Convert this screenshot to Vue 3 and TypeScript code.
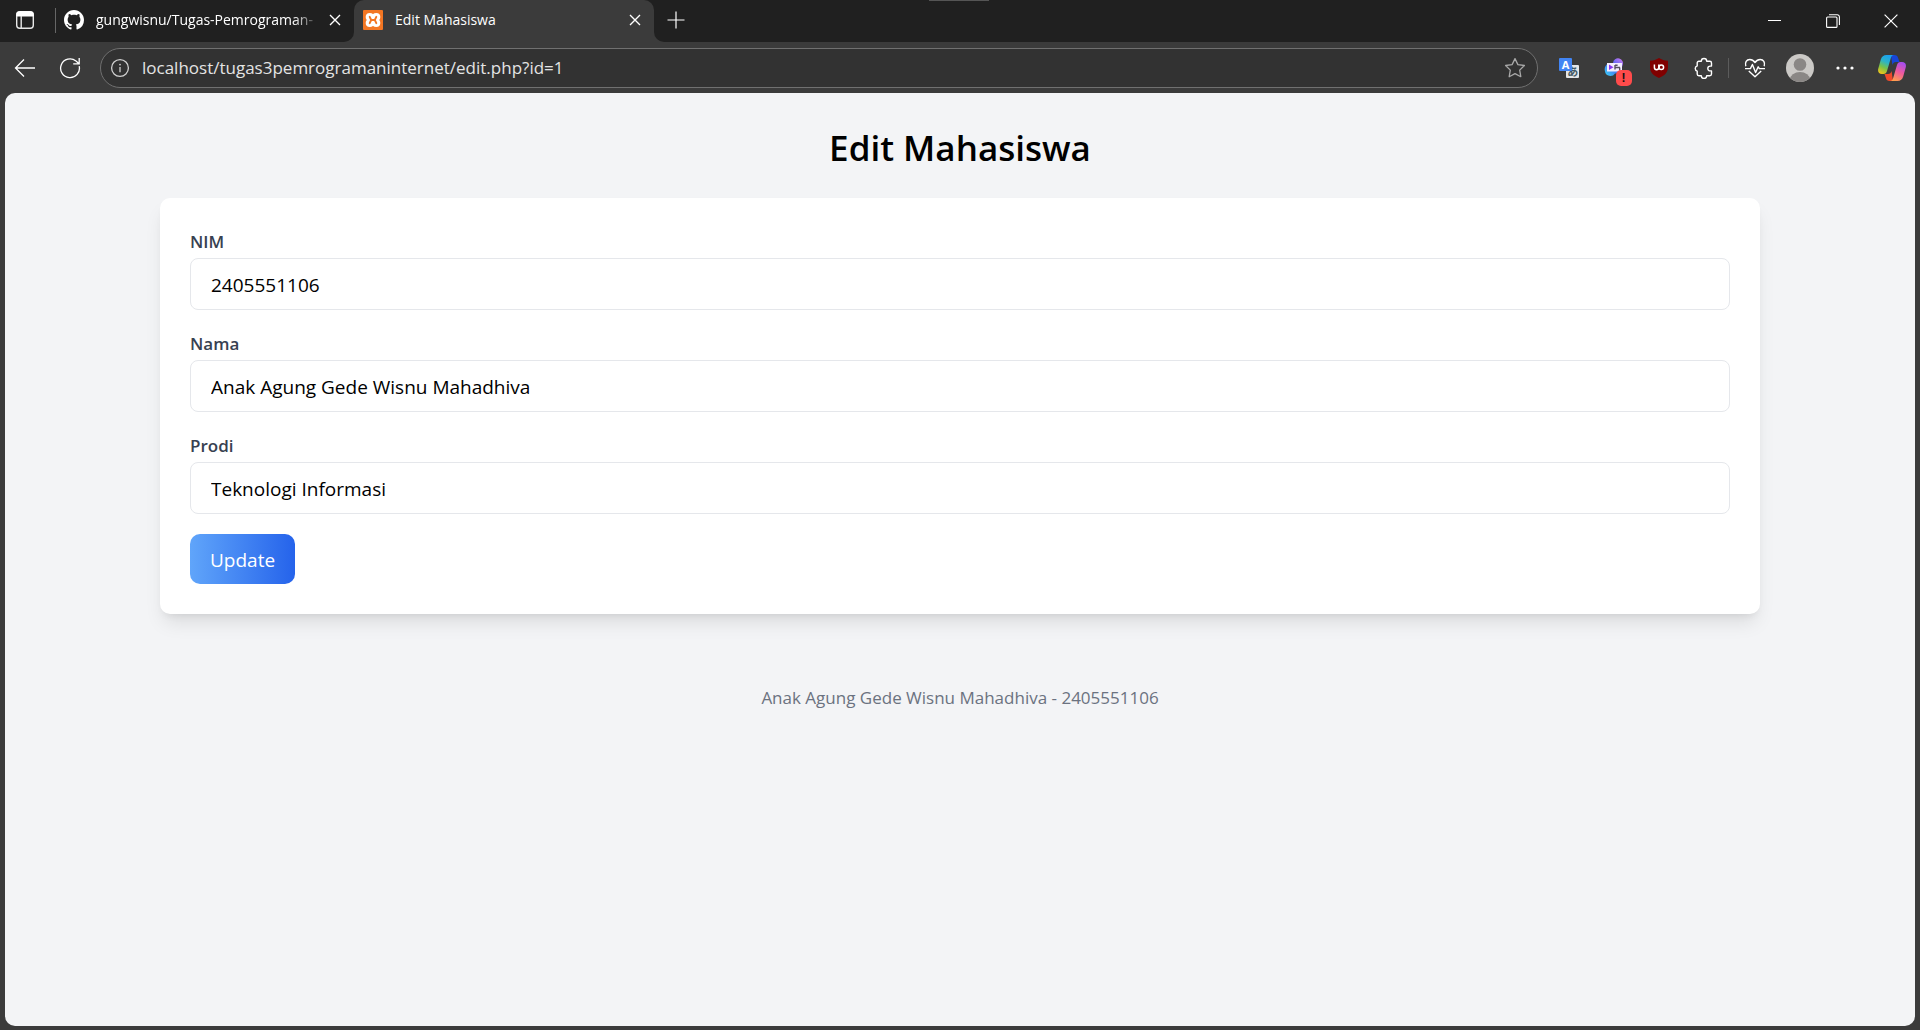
<script setup lang="ts">
import { reactive, ref } from 'vue'

interface Field {
  id: string
  label: string
  value: string
}

const address = ref('localhost/tugas3pemrogramaninternet/edit.php?id=1')

const fields = reactive<Field[]>([
  { id: 'nim', label: 'NIM', value: '2405551106' },
  { id: 'nama', label: 'Nama', value: 'Anak Agung Gede Wisnu Mahadhiva' },
  { id: 'prodi', label: 'Prodi', value: 'Teknologi Informasi' },
])
</script>

<template>
  <div class="browser">
    <header class="tabstrip">
      <div class="strip-left">
        <button class="icon-btn tab-actions" type="button" aria-label="Tab actions">
          <svg width="20" height="20" viewBox="0 0 20 20" fill="none">
            <rect x="1.7" y="1.7" width="16.6" height="16.6" rx="3" stroke="#e8e8e8" stroke-width="1.4" />
            <path d="M1.7 6V4.5a2.8 2.8 0 0 1 2.8-2.8h11a2.8 2.8 0 0 1 2.8 2.8V6z" fill="#fff" stroke="#fff" />
            <path d="M6.2 6v12" stroke="#e8e8e8" stroke-width="1.4" />
          </svg>
        </button>
        <div class="tab idle">
          <svg class="favicon" width="20" height="20" viewBox="0 0 16 16" fill="#fff">
            <path d="M8 0C3.58 0 0 3.58 0 8c0 3.54 2.29 6.53 5.47 7.59.4.07.55-.17.55-.38 0-.19-.01-.82-.01-1.49-2.01.37-2.53-.49-2.69-.94-.09-.23-.48-.94-.82-1.13-.28-.15-.68-.52-.01-.53.63-.01 1.08.58 1.23.82.72 1.21 1.87.87 2.33.66.07-.52.28-.87.51-1.07-1.78-.2-3.64-.89-3.64-3.95 0-.87.31-1.59.82-2.15-.08-.2-.36-1.02.08-2.12 0 0 .67-.21 2.2.82.64-.18 1.32-.27 2-.27s1.36.09 2 .27c1.53-1.04 2.2-.82 2.2-.82.44 1.1.16 1.92.08 2.12.51.56.82 1.27.82 2.15 0 3.07-1.87 3.75-3.65 3.95.29.25.54.73.54 1.48 0 1.07-.01 1.93-.01 2.2 0 .21.15.46.55.38A8.01 8.01 0 0 0 16 8c0-4.42-3.58-8-8-8z" />
          </svg>
          <span class="tab-title faded">gungwisnu/Tugas-Pemrograman-</span>
          <button class="icon-btn close" type="button" aria-label="Close tab">
            <svg width="12" height="12" viewBox="0 0 12 12" stroke="#fff" stroke-width="1.4"><path d="M1 1l10 10M11 1L1 11" /></svg>
          </button>
        </div>
      </div>
      <div class="strip-active">
        <div class="tab active">
          <svg class="favicon" width="20" height="20" viewBox="0 0 20 20">
            <rect width="20" height="20" rx="1" fill="#f37623" />
            <g fill="#fff">
              <circle cx="6.8" cy="7" r="4.1" />
              <circle cx="13.2" cy="7" r="4.1" />
              <circle cx="6.8" cy="13" r="4.1" />
              <circle cx="13.2" cy="13" r="4.1" />
              <rect x="4.5" y="6" width="11" height="8" />
            </g>
            <path d="M6.7 6.8L8.2 10l-1.5 3.2M13.3 6.8L11.8 10l1.5 3.2M8.2 10h3.600" fill="none" stroke="#f37623" stroke-width="1.9" stroke-linecap="round" stroke-linejoin="round" />
          </svg>
          <span class="tab-title">Edit Mahasiswa</span>
          <button class="icon-btn close" type="button" aria-label="Close tab">
            <svg width="12" height="12" viewBox="0 0 12 12" stroke="#fff" stroke-width="1.4"><path d="M1 1l10 10M11 1L1 11" /></svg>
          </button>
        </div>
      </div>
      <div class="strip-right">
        <button class="icon-btn new-tab" type="button" aria-label="New tab">
          <svg width="18" height="18" viewBox="0 0 18 18" stroke="#fff" stroke-width="1.2"><path d="M9 .5v17M.5 9h17" /></svg>
        </button>
        <div class="window-controls">
          <button class="icon-btn" type="button" aria-label="Minimize">
            <svg width="14" height="14" viewBox="0 0 14 14" stroke="#fff" stroke-width="1"><path d="M0 6.5h13" /></svg>
          </button>
          <button class="icon-btn" type="button" aria-label="Restore">
            <svg width="14" height="14" viewBox="0 0 14 14" stroke="#fff" stroke-width="1.1" fill="none">
              <rect x=".6" y="3" width="10.4" height="10.4" rx="1" />
              <path d="M3 .8h8.2a2.2 2.2 0 0 1 2.2 2.2V11" />
            </svg>
          </button>
          <button class="icon-btn" type="button" aria-label="Close window">
            <svg width="14" height="14" viewBox="0 0 14 14" stroke="#fff" stroke-width="1.2"><path d="M.6.6l12.8 12.8M13.4.6L.6 13.4" /></svg>
          </button>
        </div>
      </div>
      <span class="grip"></span>
    </header>

    <nav class="toolbar" aria-label="Browser toolbar">
      <button class="icon-btn tool" type="button" aria-label="Back">
        <svg width="22" height="20" viewBox="0 0 22 20" fill="none" stroke="#fff" stroke-width="1.3"><path d="M21 10H1.5M10 1.500L1.500 10l8.500 8.500" /></svg>
      </button>
      <button class="icon-btn tool" type="button" aria-label="Refresh">
        <svg width="22" height="22" viewBox="0 0 22 22" fill="none" stroke="#fff" stroke-width="1.3"><path d="M20.200 9.200A9.400 9.400 0 1 1 17 4l2.500 2.200M20.200 1v5.800h-6" /></svg>
      </button>
      <div class="address">
        <svg width="20" height="20" viewBox="0 0 20 20" fill="none" stroke="#d0d0d0" stroke-width="1.3">
          <circle cx="10" cy="10" r="8.4" />
          <path d="M10 9v5.2" />
          <circle cx="10" cy="6.6" r=".9" fill="#d0d0d0" stroke="none" />
        </svg>
        <input v-model="address" class="url" type="text" aria-label="Address" spellcheck="false" />
        <button class="icon-btn star" type="button" aria-label="Add to favorites">
          <svg width="22" height="22" viewBox="0 0 22 22" fill="none" stroke="#a8a8a8" stroke-width="1.3" stroke-linejoin="round">
            <path d="M11 1.6l2.9 6 6.5.9-4.7 4.6 1.1 6.6-5.8-3.1-5.8 3.1 1.1-6.6L1.6 8.5l6.5-.9z" />
          </svg>
        </button>
      </div>
      <div class="extensions">
        <button class="icon-btn tool" type="button" aria-label="Translate">
          <svg width="20" height="20" viewBox="0 0 20 20">
            <rect x="7" y="7" width="13" height="13" rx="1" fill="#e4e6e8" />
            <text x="13.8" y="18" font-size="11" font-weight="bold" text-anchor="middle" fill="#455a64" class="jp">あ</text>
            <rect width="13" height="13" rx="1" fill="#4285f4" />
            <text x="6.5" y="10.500" font-size="11" font-weight="bold" text-anchor="middle" fill="#fff" class="latin">A</text>
          </svg>
        </button>
        <button class="icon-btn tool" type="button" aria-label="Video assistant">
          <span class="badged">
            <svg width="20" height="20" viewBox="0 0 20 20">
              <defs>
                <linearGradient id="cloud" x1="0" y1="1" x2="1" y2="0">
                  <stop offset="0" stop-color="#39d5f5" />
                  <stop offset=".55" stop-color="#4a63f5" />
                  <stop offset="1" stop-color="#d47af0" />
                </linearGradient>
              </defs>
              <path d="M9 5a5 5 0 1 1 9.500 2.500L16 15l-5 .5a5.500 5.500 0 0 1-10-2C0 10 1.500 7 4 5.500z" fill="url(#cloud)" />
              <rect x="3" y="5" width="15" height="8.500" fill="#f3edff" />
              <path d="M5 6.500l4.500 2.800L5 12.100z" fill="#8a35ee" />
              <path d="M11 7.200h2.600M11 9.500h5M11 7v4.600M15.700 9.500v3" stroke="#56505f" stroke-width="1.4" fill="none" />
            </svg>
            <span class="badge">!</span>
          </span>
        </button>
        <button class="icon-btn tool" type="button" aria-label="Content blocker">
          <svg width="20" height="20" viewBox="0 0 20 20">
            <path d="M10 0c2.500 1.700 5.500 2.500 9 2.700V9c0 5.500-3.500 8.700-9 11C4.500 17.700 1 14.500 1 9V2.700C4.500 2.500 7.500 1.700 10 0z" fill="#800000" />
            <path d="M5.400 6.500v3a2.200 2.200 0 0 0 4.400 0v-3" fill="none" stroke="#fff" stroke-width="1.5" />
            <circle cx="12.300" cy="9.200" r="2.300" fill="none" stroke="#fff" stroke-width="1.5" />
          </svg>
        </button>
        <button class="icon-btn tool" type="button" aria-label="Extensions">
          <svg width="22" height="22" viewBox="0 0 22 22" fill="none" stroke="#fff" stroke-width="1.4" stroke-linejoin="round">
            <path d="M8.300 4.200a2.700 2.700 0 0 1 5.400 0h3.100a1.700 1.700 0 0 1 1.700 1.700v3.200h-1.300a2.400 2.400 0 0 0 0 4.800h1.300v3.200a1.700 1.700 0 0 1-1.700 1.700h-3.100a2.700 2.700 0 0 1-5.400 0H5.900a1.700 1.700 0 0 1-1.700-1.700v-3a2.700 2.700 0 0 1 0-5.200V5.900a1.700 1.700 0 0 1 1.700-1.700z" />
          </svg>
        </button>
      </div>
      <span class="divider"></span>
      <button class="icon-btn tool" type="button" aria-label="Browser essentials">
        <svg width="22" height="20" viewBox="0 0 22 20" fill="none" stroke="#fff" stroke-width="1.4" stroke-linejoin="round">
          <path d="M1.800 8.200C.6 4.500 2.600 1.500 5.800 1.500c2.300 0 3.900 1.200 5.200 3 1.300-1.800 2.900-3 5.200-3 3.200 0 5.200 3 4 6.700M4.800 13l6.200 5.800 6.200-5.800M1 10.600h5.400l2-4.100 3.200 8 2.600-5.700 1.200 1.800H21" />
        </svg>
      </button>
      <button class="icon-btn tool" type="button" aria-label="Profile">
        <svg width="28" height="28" viewBox="0 0 28 28">
          <defs><clipPath id="face"><circle cx="14" cy="14" r="14" /></clipPath></defs>
          <g clip-path="url(#face)">
            <rect width="28" height="28" fill="#cbc9c6" />
            <circle cx="14" cy="10.500" r="6.300" fill="#8a8785" />
            <ellipse cx="14" cy="25.500" rx="10" ry="7.500" fill="#8a8785" />
          </g>
        </svg>
      </button>
      <button class="icon-btn tool" type="button" aria-label="Settings and more">
        <svg width="18" height="4" viewBox="0 0 18 4" fill="#fff"><circle cx="2" cy="2" r="1.600" /><circle cx="9" cy="2" r="1.600" /><circle cx="16" cy="2" r="1.600" /></svg>
      </button>
      <button class="icon-btn copilot" type="button" aria-label="Copilot">
        <svg width="28" height="26" viewBox="0 0 28 26">
          <defs>
            <linearGradient id="cpLeft" x1=".6" y1="0" x2=".2" y2="1">
              <stop offset="0" stop-color="#1ba0ee" /><stop offset=".35" stop-color="#2cb3c9" /><stop offset=".65" stop-color="#77c24a" /><stop offset="1" stop-color="#f5c518" />
            </linearGradient>
            <linearGradient id="cpRight" x1=".7" y1="0" x2=".3" y2="1">
              <stop offset="0" stop-color="#a64df0" /><stop offset=".5" stop-color="#ef5a9c" /><stop offset="1" stop-color="#ffa04d" />
            </linearGradient>
          </defs>
          <path d="M13 0h3.500c2 0 3 1 3.500 2.800L21.500 7H18c-2 0-3 1-3.600 3z" fill="#1745d8" />
          <path d="M15 26h-3.500c-2 0-3-1-3.500-2.800L6.500 19H10c2 0 3-1 3.600-3z" fill="#f04a2a" />
          <path d="M8.500 0H16c-2 0-2.700 1.500-3.300 3.500L9 16c-.6 2-1.600 3-3.500 3H4c-3 0-4.600-2-3.700-5.500l2.500-9C3.700 1.600 5.500 0 8.500 0z" fill="url(#cpLeft)" />
          <path d="M19.500 26H12c2 0 2.700-1.500 3.300-3.500L19 10c.6-2 1.600-3 3.500-3H24c3 0 4.600 2 3.700 5.500l-2.500 9c-.9 2.900-2.700 4.500-5.700 4.500z" fill="url(#cpRight)" />
        </svg>
      </button>
    </nav>

    <div class="viewport">
      <main class="container">
        <h1>Edit Mahasiswa</h1>
        <form class="card" @submit.prevent>
          <div v-for="field in fields" :key="field.id" class="field">
            <label :for="field.id">{{ field.label }}</label>
            <input :id="field.id" v-model="field.value" type="text" spellcheck="false" />
          </div>
          <button class="submit" type="submit">Update</button>
        </form>
      </main>
      <footer>Anak Agung Gede Wisnu Mahadhiva - 2405551106</footer>
    </div>
  </div>
</template>

<style>
body {
  margin: 0;
}
</style>

<style scoped>
* {
  box-sizing: border-box;
}

.browser {
  display: flex;
  flex-direction: column;
  min-height: 100vh;
  background: #3b3b3b;
  font-family: "Open Sans", "Noto Sans", sans-serif;
}

.icon-btn {
  display: flex;
  align-items: center;
  justify-content: center;
  flex: none;
  padding: 0;
  border: 0;
  background: none;
}

.tabstrip {
  position: relative;
  display: flex;
  height: 43px;
}

.strip-left {
  display: flex;
  flex: none;
  width: 354px;
  height: 42px;
  background: #202020;
  border-bottom-right-radius: 10px;
}

.tab-actions {
  width: 50px;
  height: 40px;
}

.tab {
  display: flex;
  align-items: center;
  height: 40px;
}

.idle {
  flex: 1;
  padding-left: 8px;
}

.idle::before {
  content: "";
  width: 1px;
  height: 25px;
  margin-left: -3px;
  margin-right: 8px;
  background: #666;
}

.favicon {
  flex: none;
  margin-right: 12px;
}

.tab-title {
  flex: 1;
  overflow: hidden;
  color: #fff;
  font-size: 14px;
  line-height: 20px;
  white-space: nowrap;
}

.faded {
  -webkit-mask-image: linear-gradient(to right, #000 88%, transparent);
  mask-image: linear-gradient(to right, #000 88%, transparent);
}

.close {
  width: 30px;
  height: 30px;
  margin-right: 4px;
}

.strip-active {
  flex: none;
  width: 300px;
  background: #202020;
}

.active {
  height: 43px;
  padding: 0 0 3px 9px;
  background: #3b3b3b;
  border-radius: 10px 10px 0 0;
}

.strip-right {
  display: flex;
  flex: 1;
  justify-content: space-between;
  height: 42px;
  background: #202020;
  border-bottom-left-radius: 10px;
}

.new-tab {
  width: 43px;
  height: 40px;
}

.window-controls {
  display: flex;
}

.window-controls .icon-btn {
  width: 58px;
  height: 42px;
}

.grip {
  position: absolute;
  top: 0;
  left: 50%;
  width: 60px;
  height: 1px;
  margin-left: -31px;
  background: #555;
}

.toolbar {
  display: flex;
  align-items: center;
  height: 50px;
  padding: 0 3px 0 2px;
}

.tool {
  width: 45px;
  height: 40px;
}

.address {
  display: flex;
  flex: 1;
  align-items: center;
  height: 40px;
  margin: 0 8px;
  padding: 0 0 0 9px;
  background: #323232;
  border: 1px solid #707070;
  border-radius: 20px;
}

.url {
  flex: 1;
  min-width: 0;
  height: 30px;
  margin-left: 12px;
  padding: 0 0 2px;
  border: 0;
  outline: 0;
  background: none;
  color: #e4e4e4;
  font-family: inherit;
  font-size: 17px;
}

.star {
  width: 44px;
  height: 38px;
}

.extensions {
  display: flex;
}

.jp {
  font-family: "Noto Sans CJK JP", sans-serif;
}

.latin {
  font-family: "Open Sans", sans-serif;
}

.badged {
  position: relative;
  display: flex;
}

.badge {
  position: absolute;
  top: 12px;
  left: 12px;
  width: 16px;
  height: 16px;
  border-radius: 5px;
  background: #ff4b4b;
  color: #111;
  font-size: 12px;
  font-weight: 700;
  line-height: 16px;
  text-align: center;
}

.divider {
  width: 1px;
  height: 20px;
  margin: 0 3px 0 2px;
  background: #5c5c5c;
}

.copilot {
  width: 50px;
  height: 40px;
}

.viewport {
  flex: 1;
  margin: 0 5px 4px;
  padding-top: 32px;
  background: #f3f4f6;
  border-radius: 10px;
}

.container {
  max-width: 1600px;
  margin: 0 auto;
}

h1 {
  margin: 0 0 28px;
  color: #000;
  font-size: 35px;
  font-weight: 600;
  line-height: 45px;
  text-align: center;
}

.card {
  padding: 30px;
  background: #fff;
  border-radius: 10px;
  box-shadow: 0 12px 19px -4px rgba(0, 0, 0, 0.1), 0 5px 8px -5px rgba(0, 0, 0, 0.1);
}

.field {
  margin-bottom: 20px;
}

label {
  display: block;
  margin-bottom: 3px;
  color: #374151;
  font-size: 17px;
  font-weight: 600;
  line-height: 27px;
}

.field input {
  display: block;
  width: 100%;
  height: 52px;
  padding: 2px 20px 0;
  border: 1px solid #e5e7eb;
  border-radius: 8px;
  outline: 0;
  background: #fff;
  color: #000;
  font-family: inherit;
  font-size: 19px;
}

.submit {
  display: block;
  height: 50px;
  padding: 2px 20px 0;
  border: 0;
  border-radius: 10px;
  background: linear-gradient(to right, #60a5fa, #2563eb);
  color: #fff;
  font-family: inherit;
  font-size: 19px;
}

footer {
  margin-top: 70px;
  color: #6b7280;
  font-size: 17px;
  line-height: 27px;
  text-align: center;
}
</style>
